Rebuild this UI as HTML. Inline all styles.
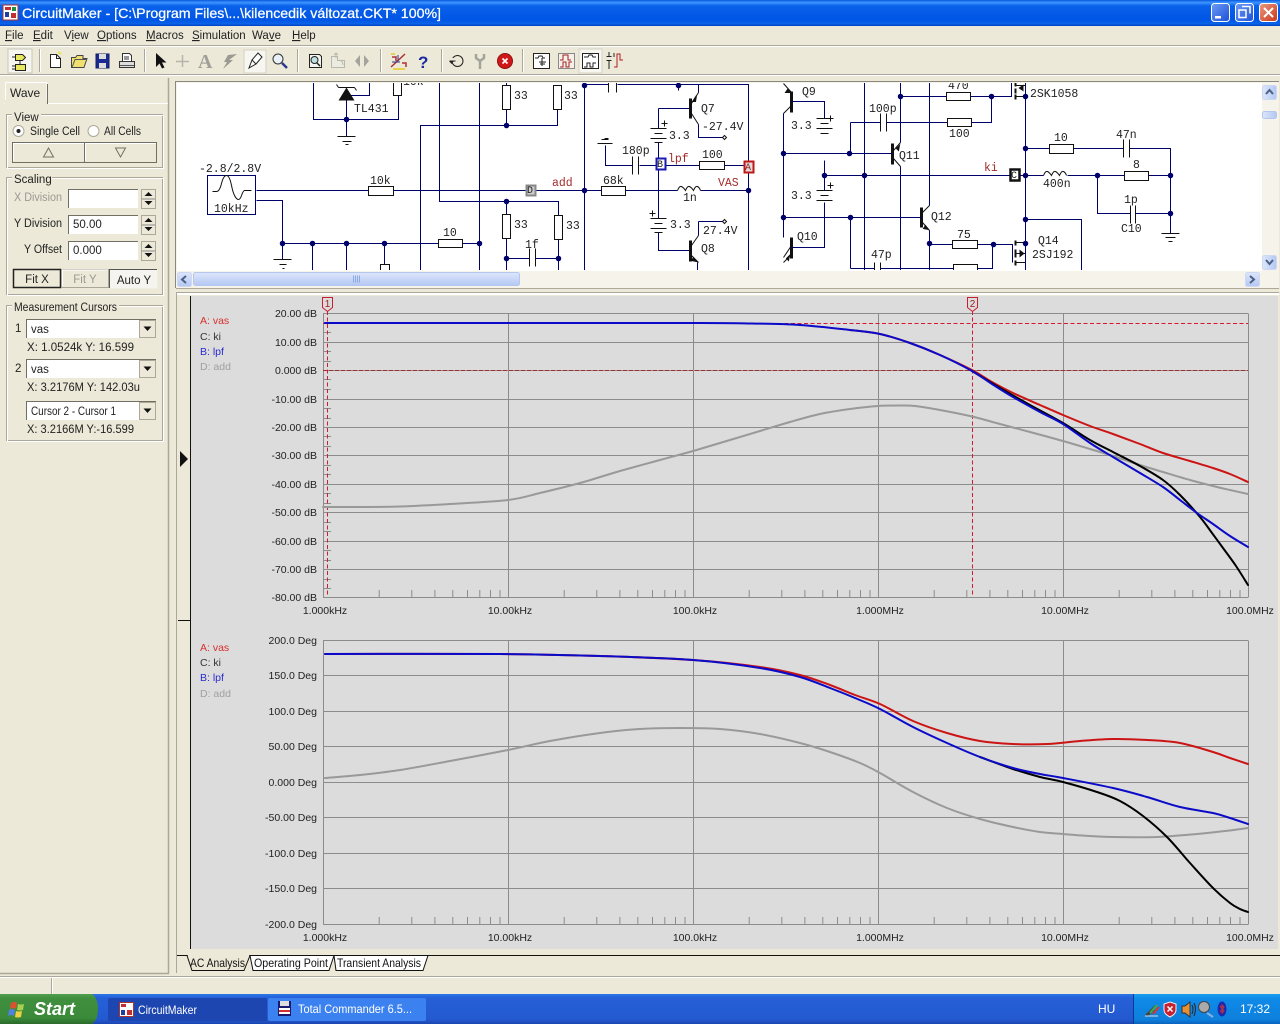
<!DOCTYPE html>
<html><head><meta charset="utf-8"><title>CircuitMaker</title>
<style>
html,body{margin:0;padding:0;background:#ece9d8;overflow:hidden}
svg{display:block;font-family:"Liberation Sans",sans-serif;font-size:11px}
.m{font-family:"Liberation Mono",monospace;font-size:11.5px;fill:#222}
.w{fill:none;stroke:#00006a;stroke-width:1}
.d{fill:none;stroke:#00006a;stroke-width:5.5;stroke-linecap:round}
.k{fill:none;stroke:#111;stroke-width:1}
.K{fill:none;stroke:#111;stroke-width:3}
.K2{fill:none;stroke:#111;stroke-width:2}
.res{fill:#fff;stroke:#111;stroke-width:1}
.g{fill:none;stroke:#8c8c8c;stroke-width:1}
.c{fill:none;stroke-width:2;stroke-linejoin:round;stroke-linecap:round}
.y{font-size:10.5px;fill:#222;text-anchor:end}
.x{font-size:10.5px;fill:#222;text-anchor:middle}
.l{font-size:10.5px}
.t{font-size:11.5px;fill:#222}
.hi{fill:none;stroke:#fff}
.sh{fill:none;stroke:#aca899}
.dk{fill:none;stroke:#716f64}
</style></head><body>
<svg width="1280" height="1024" viewBox="0 0 1280 1024" xmlns="http://www.w3.org/2000/svg">
<defs>
<linearGradient id="tb" x1="0" y1="0" x2="0" y2="1"><stop offset="0" stop-color="#0a5ae0"/><stop offset=".1" stop-color="#3d95ff"/><stop offset=".22" stop-color="#0a62ea"/><stop offset=".75" stop-color="#0055e5"/><stop offset=".92" stop-color="#0a63e8"/><stop offset="1" stop-color="#003cc0"/></linearGradient>
<linearGradient id="task" x1="0" y1="0" x2="0" y2="1"><stop offset="0" stop-color="#2a78e8"/><stop offset=".12" stop-color="#2560d8"/><stop offset=".85" stop-color="#2459d0"/><stop offset="1" stop-color="#1a45b0"/></linearGradient>
<linearGradient id="tray" x1="0" y1="0" x2="0" y2="1"><stop offset="0" stop-color="#1aa0f0"/><stop offset=".15" stop-color="#0f8ae8"/><stop offset=".85" stop-color="#0e80dc"/><stop offset="1" stop-color="#0a62c0"/></linearGradient>
<linearGradient id="start" x1="0" y1="0" x2="0" y2="1"><stop offset="0" stop-color="#4f9f4f"/><stop offset=".15" stop-color="#3f8f3f"/><stop offset=".8" stop-color="#3a8a3a"/><stop offset="1" stop-color="#2a6a2a"/></linearGradient>
<linearGradient id="sb" x1="0" y1="0" x2="0" y2="1"><stop offset="0" stop-color="#dde6fb"/><stop offset="1" stop-color="#b4c8f4"/></linearGradient>
<linearGradient id="sbv" x1="0" y1="0" x2="1" y2="0"><stop offset="0" stop-color="#dde6fb"/><stop offset="1" stop-color="#b4c8f4"/></linearGradient>
<linearGradient id="wb" x1="0" y1="0" x2="1" y2="1"><stop offset="0" stop-color="#6f9cf4"/><stop offset="1" stop-color="#1b50d8"/></linearGradient>
<linearGradient id="wr" x1="0" y1="0" x2="1" y2="1"><stop offset="0" stop-color="#ec9a80"/><stop offset="1" stop-color="#c8361a"/></linearGradient>
<clipPath id="sch"><rect x="177" y="83" width="1085" height="187"/></clipPath>
<path id="dec" d="M55.7 0v-7M88.3 0v-7M111.4 0v-7M129.3 0v-7M144 0v-7M156.3 0v-7M167 0v-7M176.5 0v-7" fill="none" stroke="#8c8c8c"/>
</defs>

<rect width="1280" height="1024" fill="#ece9d8"/>

<!-- Title bar -->
<rect width="1280" height="26" fill="url(#tb)"/>
<rect x="3" y="5" width="15" height="15" fill="#fff" stroke="#a33"/>
<path d="M5 7h6v3H5zM11 13h5v5h-5z" fill="#c03030"/><path d="M5 12h4v5H5z" fill="#2040a0"/><path d="M12 7h4v4h-4z" fill="#209040"/>
<text x="22" y="18" font-size="14" fill="#fff" textLength="419" lengthAdjust="spacingAndGlyphs" style="stroke:#fff;stroke-width:.25">CircuitMaker - [C:\Program Files\...\kilencedik változat.CKT* 100%]</text>
<rect x="1211.500" y="3.500" width="18" height="18" rx="3" fill="url(#wb)" stroke="#fff"/><path d="M1215 16h6v2.500h-6z" fill="#fff"/>
<rect x="1235.500" y="3.500" width="18" height="18" rx="3" fill="url(#wb)" stroke="#fff"/><path d="M1242 6.500h8v7M1239 10h7v7.500h-7z" fill="none" stroke="#fff" stroke-width="1.500"/>
<rect x="1259.500" y="3.500" width="18" height="18" rx="3" fill="url(#wr)" stroke="#fff"/><path d="M1264 8l9 9M1273 8l-9 9" stroke="#fff" stroke-width="2"/>

<!-- Menu -->
<g fill="#222" font-size="11.500">
<text x="5" y="39"><tspan text-decoration="underline">F</tspan>ile</text>
<text x="33" y="39"><tspan text-decoration="underline">E</tspan>dit</text>
<text x="64" y="39">V<tspan text-decoration="underline">i</tspan>ew</text>
<text x="97" y="39"><tspan text-decoration="underline">O</tspan>ptions</text>
<text x="146" y="39"><tspan text-decoration="underline">M</tspan>acros</text>
<text x="192" y="39"><tspan text-decoration="underline">S</tspan>imulation</text>
<text x="252" y="39">Wa<tspan text-decoration="underline">v</tspan>e</text>
<text x="292" y="39"><tspan text-decoration="underline">H</tspan>elp</text>
</g>
<path d="M0 45.500H1280" stroke="#aca899"/><path d="M0 46.500H1280" stroke="#fff"/>
<path d="M0 74.500H1280" stroke="#aca899"/><path d="M0 75.500H1280" stroke="#fff"/>

<!-- Toolbar -->
<path d="M39.500 49v23M144.500 49v23M297.500 49v23M380.500 49v23M441.500 49v23M522.500 49v23" stroke="#aca899"/>
<path d="M40.500 49v23M145.500 49v23M298.500 49v23M381.500 49v23M442.500 49v23M523.500 49v23" stroke="#fff"/>
<rect x="8" y="49" width="24" height="24" fill="#f6f5ef" stroke="#c8c6b8"/>
<path d="M15.500 54.500h7l3 3-3 3h-7zM15.500 64.500h10v6h-10zM20 61v3M12 57h3M12 66h3M12 69h3" fill="#e8e860" stroke="#222"/>
<path d="M50.500 54.500h6l4 4v9h-10z" fill="#fff" stroke="#222"/><path d="M56.500 54.500v4h4" fill="none" stroke="#222"/><path d="M58 52l3 2" stroke="#e8e050" stroke-width="2"/>
<path d="M71.500 67.500v-10h4l1.500-2h6v3h4l-3 9z" fill="#f0e070" stroke="#444"/><path d="M72 67.500l3-8h12" fill="none" stroke="#555"/>
<rect x="96" y="54" width="13" height="14" fill="#1a2a90" stroke="#102060"/><rect x="99" y="54" width="7" height="5" fill="#ddd"/><rect x="99" y="63" width="7" height="5" fill="#ddd"/>
<path d="M122.500 53.500h7l2 2v6h-9z" fill="#fff" stroke="#333"/><path d="M124 57h5M124 59h5" stroke="#333"/><rect x="119.500" y="61.500" width="15" height="6" fill="#ddd" stroke="#333"/><path d="M120 65.500h14" stroke="#555"/>
<path d="M156 53v14l3.500-3.500 2.500 5 2.500-1-2.500-5h4.500z" fill="#111"/>
<path d="M182.500 55v12M176 61.500h13" stroke="#b4b4ac" stroke-width="1.500"/>
<text x="198" y="68" font-family="Liberation Serif,serif" font-size="20" font-weight="bold" fill="#a0a098">A</text>
<path d="M237 54l-9 1-4 7h3l-4 7 10-9h-4z" fill="#9a9a92"/>
<rect x="244" y="50" width="22" height="23" fill="#f7f6f0" stroke="#d4d2c4"/>
<path d="M258 53l4 4-6 7-4-4zM252 60l-3 8 7-4" fill="#fff" stroke="#222"/>
<circle cx="278" cy="59" r="5" fill="#e8f0f8" stroke="#333"/><path d="M282 63l5 5" stroke="#2a3a90" stroke-width="2.500"/>
<path d="M309.500 54.500h10l2 2v11h-12z" fill="#f4f4f0" stroke="#222"/><circle cx="314.500" cy="60" r="3.500" fill="#bfe0e0" stroke="#222"/><path d="M317 63l3 3" stroke="#222" stroke-width="1.500"/>
<path d="M331.500 56.500h6v4h7v7h-13z" fill="#ecebe0" stroke="#b8b8ae"/><path d="M336 53v5M334 55l2-2 2 2M340 60c2 1 3 3 3 5" fill="none" stroke="#b8b8ae"/>
<path d="M360 55v12l-5-6zM364 55v12l5-6z" fill="#a4a49c"/>
<path d="M391 67l14-13M392 57h4v4M402 63h4v4" stroke="#b03030" stroke-width="1.500" fill="none"/><path d="M391 54h4M393 69h12" stroke="#e8d050" stroke-width="2"/><path d="M392 62h8M398 55v6" stroke="#2a3a90"/>
<text x="418" y="68" font-size="17" font-weight="bold" fill="#1a2aa0">?</text>
<circle cx="457.500" cy="61" r="5.500" fill="none" stroke="#222"/><path d="M449 61h5l-2.500 3z" fill="#222"/><rect x="450" y="58" width="5" height="3" fill="#ece9d8"/><path d="M449.500 61h6" stroke="#222"/>
<path d="M476 54v4l4 3v8M484 54v4l-4 3" fill="none" stroke="#a4a49c" stroke-width="2.500"/>
<circle cx="505" cy="61" r="7.500" fill="#d01818" stroke="#901010"/><path d="M502.500 58.500l5 5M507.500 58.500l-5 5" stroke="#fff" stroke-width="1.700"/>
<rect x="533.500" y="53.500" width="16" height="15" fill="#fff" stroke="#222"/><path d="M535 58h3l1-2h3l1 2h2M542 58v8M539 62h7M540 64h5" fill="none" stroke="#222"/>
<rect x="558.500" y="53.500" width="16" height="15" fill="#f6f0e8" stroke="#888"/><path d="M560 60h3v-5h5v5h3M560 67h3v-5h3v5h3v-5h3" fill="none" stroke="#a02020"/>
<rect x="579" y="49" width="23" height="24" fill="#f7f6f0" stroke="#d4d2c4"/>
<rect x="582.500" y="53.500" width="16" height="15" fill="#fff" stroke="#222"/><path d="M584 57h4l1-2h3l1 2h3M584 67h3v-4h3v4h3v-4h3" fill="none" stroke="#222"/>
<path d="M606.500 56.500h5M606.500 60.500h5M609 52v4M609 61v8" stroke="#222" fill="none"/><path d="M614 67h3v-13h3v6h3" fill="none" stroke="#b02020"/><path d="M614 53v4" stroke="#222"/>

<!-- Left panel -->
<path d="M168.500 78v896M0 973.500h169" class="sh" stroke-width="1.500"/>
<path d="M4.500 103.500H168" class="hi"/>
<path d="M5.500 104V84q0-1.500 1.500-1.500h39q1 0 1 1.500v19" fill="#ece9d8" stroke="#fff"/><path d="M47.500 84v20" class="dk"/>
<rect x="5" y="100" width="42" height="5" fill="#ece9d8"/>
<text x="10" y="97" font-size="12" fill="#222">Wave</text>

<!-- groups -->
<rect x="6.500" y="114.500" width="156" height="53" fill="none" stroke="#aca899"/><rect x="7.500" y="115.500" width="156" height="53" fill="none" stroke="#fff"/>
<rect x="12" y="110" width="29" height="12" fill="#ece9d8"/><text x="14" y="121" class="t">View</text>
<circle cx="18.500" cy="131" r="5.500" fill="#fff" stroke="#aca899"/><circle cx="18.500" cy="131" r="2" fill="#222"/>
<text x="30" y="135" class="t" textLength="50" lengthAdjust="spacingAndGlyphs">Single Cell</text>
<circle cx="93.500" cy="131" r="5.500" fill="#fff" stroke="#aca899"/>
<text x="104" y="135" class="t" textLength="37" lengthAdjust="spacingAndGlyphs">All Cells</text>
<rect x="12.500" y="142.500" width="72" height="20" fill="#ece9d8" stroke="#716f64"/><path d="M13.500 161V143.500H84" class="hi"/>
<rect x="84.500" y="142.500" width="72" height="20" fill="#ece9d8" stroke="#716f64"/><path d="M85.500 161V143.500H156" class="hi"/>
<path d="M48.500 148l-5 9h10z" fill="none" stroke="#716f64"/><path d="M115.500 148h10l-5 9z" fill="none" stroke="#716f64"/>

<rect x="6.500" y="177.500" width="156" height="117" fill="none" stroke="#aca899"/><rect x="7.500" y="178.500" width="156" height="117" fill="none" stroke="#fff"/>
<rect x="12" y="173" width="40" height="12" fill="#ece9d8"/><text x="14" y="183" class="t">Scaling</text>
<text x="14" y="201" class="t" style="fill:#9a9a92" textLength="48" lengthAdjust="spacingAndGlyphs">X Division</text>
<text x="14" y="227" class="t" textLength="48" lengthAdjust="spacingAndGlyphs">Y Division</text>
<text x="24" y="253" class="t" textLength="38" lengthAdjust="spacingAndGlyphs">Y Offset</text>
<g fill="#fff">
<rect x="68" y="189" width="70" height="19"/><rect x="68" y="215" width="70" height="19"/><rect x="68" y="241" width="70" height="19"/>
</g>
<path d="M68.500 208V189.500H138M68.500 234V215.500H138M68.500 260V241.500H138" stroke="#716f64" fill="none"/>
<text x="73" y="228" class="t">50.00</text><text x="73" y="254" class="t">0.000</text>
<g>
<rect x="141.500" y="189.500" width="14" height="19" fill="#ece9d8" stroke="#aca899"/><path d="M148.500 192l-4 4h8zM144.500 201h8l-4 4z" fill="#111"/><path d="M142 199h13" stroke="#888"/>
<rect x="141.500" y="215.500" width="14" height="19" fill="#ece9d8" stroke="#aca899"/><path d="M148.500 218l-4 4h8zM144.500 227h8l-4 4z" fill="#111"/><path d="M142 225h13" stroke="#888"/>
<rect x="141.500" y="241.500" width="14" height="19" fill="#ece9d8" stroke="#aca899"/><path d="M148.500 244l-4 4h8zM144.500 253h8l-4 4z" fill="#111"/><path d="M142 251h13" stroke="#888"/>
</g>
<rect x="13.500" y="269.500" width="47" height="18" fill="#ece9d8" stroke="#222" stroke-width="1.500"/>
<text x="37" y="283" class="t" text-anchor="middle">Fit X</text>
<rect x="61.500" y="269.500" width="47" height="18" fill="#ece9d8" stroke="#a8a698"/><path d="M62.500 286v-16H108" class="hi"/>
<text x="85" y="283" class="t" text-anchor="middle" style="fill:#9a9a92">Fit Y</text>
<rect x="109.500" y="269.500" width="48" height="19" fill="#f5f4ee"/><path d="M109.500 288V269.500H157" stroke="#555" fill="none"/>
<text x="134" y="284" class="t" text-anchor="middle">Auto Y</text>

<rect x="6.500" y="305.500" width="156" height="135" fill="none" stroke="#aca899"/><rect x="7.500" y="306.500" width="156" height="135" fill="none" stroke="#fff"/>
<rect x="12" y="301" width="107" height="12" fill="#ece9d8"/><text x="14" y="311" class="t" textLength="103" lengthAdjust="spacingAndGlyphs">Measurement Cursors</text>
<text x="15" y="332" class="t">1</text><text x="15" y="372" class="t">2</text>
<g>
<rect x="26" y="319" width="130" height="19" fill="#fff"/><path d="M26.500 338V319.500H156" stroke="#716f64" fill="none"/><rect x="139.500" y="320.500" width="16" height="17" fill="#ece9d8" stroke="#aca899"/><path d="M143.500 326.500h8l-4 4.500z" fill="#111"/>
<rect x="26" y="359" width="130" height="19" fill="#fff"/><path d="M26.500 378V359.500H156" stroke="#716f64" fill="none"/><rect x="139.500" y="360.500" width="16" height="17" fill="#ece9d8" stroke="#aca899"/><path d="M143.500 366.500h8l-4 4.500z" fill="#111"/>
<rect x="26" y="401" width="130" height="19" fill="#fff"/><path d="M26.500 420V401.500H156" stroke="#716f64" fill="none"/><rect x="139.500" y="402.500" width="16" height="17" fill="#ece9d8" stroke="#aca899"/><path d="M143.500 408.500h8l-4 4.500z" fill="#111"/>
</g>
<text x="31" y="333" class="t">vas</text><text x="31" y="373" class="t">vas</text>
<text x="31" y="415" class="t" textLength="85" lengthAdjust="spacingAndGlyphs">Cursor 2 - Cursor 1</text>
<text x="27" y="351" class="t" textLength="107" lengthAdjust="spacingAndGlyphs">X: 1.0524k  Y: 16.599</text>
<text x="27" y="391" class="t" textLength="113" lengthAdjust="spacingAndGlyphs">X: 3.2176M  Y: 142.03u</text>
<text x="27" y="433" class="t" textLength="107" lengthAdjust="spacingAndGlyphs">X: 3.2166M  Y:-16.599</text>

<!-- Schematic pane -->
<rect x="176" y="82" width="1103" height="206" fill="#f5f3ea"/>
<rect x="177" y="83" width="1085" height="188" fill="#fff"/>
<path d="M175.500 288V81.500H1279" stroke="#8a887c" fill="none"/>
<g clip-path="url(#sch)">
<g transform="translate(.5 .5)">
<path class="w" d="M313 82V119H398V95M369 82V95H346M346 100V136M439 82V201H558V215M558 239V270M479 82V270M420 270V125H557V109M506 82V85M506 109V125M506 201V214M506 238V270M256 190H368M393 190H525M536 190H601M625 190H677M700 190H748M256 200H282V259M282 243H438M462 243H479M312 243V270M346 243V270M384 243V264M506 258H529M535 258H558"/>
<path class="k" d="M337 136h18M342 141h9M345 144h3M273 259h18M279 264h7M282 268h2M529 248v18M535 248v18"/>
<path d="M338 100h16l-8-13z" fill="#111"/><path d="M338 87h16M338 87l-2-3M354 87l2 3" class="k"/>
<rect class="res" x="393" y="72" width="8" height="23"/>
<rect class="res" x="502" y="85" width="8" height="24"/><rect class="res" x="553" y="85" width="8" height="24"/>
<rect class="res" x="502" y="214" width="8" height="24"/><rect class="res" x="554" y="215" width="8" height="24"/>
<rect class="res" x="368" y="186" width="25" height="9"/><rect class="res" x="438" y="239" width="24" height="8"/>
<rect x="207" y="175" width="48" height="39" fill="#fff" stroke="#00006a"/>
<path d="M212 191h4q3 0 5-8t5-8 5 10 5 13 5-3 4-5h6" fill="none" stroke="#111"/>
<rect x="380" y="264" width="9" height="10" class="res"/>
<path class="d" d="M346 119h0M506 125h0M282 243h0M312 243h0M346 243h0M384 243h0M479 243h0M506 201h0M506 258h0M558 258h0"/>
<rect x="526" y="185" width="9" height="10" fill="#ccc" stroke="#888" stroke-width="2"/>

<!-- middle -->
<path class="w" d="M584 82V270M584 84H608M617 84H748V270M678 84V90M658 108H690M658 108V128M698 84V92M698 124V137H722M658 142V218M658 232V250H690M605 145V165H632M639 165H655M665 165H699M724 165H744M698 221V235M698 221H722M697 262V270"/>
<path class="k" d="M650 128h16M654 133h8M650 138h16M654 142h8M597 143h15M601 139h7M632 156v18M638 156v18M650 218h16M654 223h8M650 228h16M654 232h8"/>
<path d="M608 82v10M616 82v10" class="k"/>
<path class="K" d="M690 98v20M690 240v21M791 91v21M791 237v21M892 143v21M921 207v20"/>
<path class="k" d="M691 103l7-11M691 113l7 11M691 245l7-10M691 255l7 7M783 83l8 9M791 105l-8 8M791 245l-8 12M783 262l8-8M893 150l7-8M893 158l7 8M922 212l7-7M922 222l7 8"/>
<path d="M692 101l4-6-1 6zM693 257l3 4-5-1zM787 89l3 3-5 0zM786 258l3-3-1 5zM896 148l3-3-1 5zM925 225l3 4-5-1z" fill="#111" stroke="#111"/>
<path class="k" d="M664 120v6M661 123h6M652 210v6M649 213h6M830 115v6M827 118h6M830 182v6M827 185h6M604 138h4"/>
<path d="M722 137l2-2 2 2-2 2zM722 221l2-2 2 2-2 2z" fill="#fff" stroke="#111"/>
<rect class="res" x="699" y="161" width="25" height="8"/><rect class="res" x="601" y="186" width="24" height="9"/>
<path class="k" d="M677 190q2-5 4-4t4 4q2-5 4-4t4 4q2-5 4-4t3 4M1043 175q2-5 4-4t4 4q2-5 4-4t4 4q2-5 4-4t3 4"/>
<rect x="656" y="158" width="9" height="11" fill="#fff" stroke="#1a1ab0" stroke-width="2"/>
<rect x="744" y="161" width="9" height="11" fill="#ddd" stroke="#c01818" stroke-width="2"/>
<path class="d" d="M584 85h0M678 85h0M584 190h0M748 190h0"/>

<!-- right -->
<path class="w" d="M783 113V237M791 101H824V118M824 160V190M824 202V247H791M783 153H892M783 217H921M824 175H1009M850 122V153M850 122H880M886 122H947M971 122H991V96M864 82V270M900 82V142M900 166V270M900 96H946M970 96H1011V82M929 82V205M929 230V270M850 217V268M850 268H874M880 268H953M929 244H952M977 244H1012V262M992 244V268H977M1025 82V270M1025 148H1049M1073 148H1123M1129 148H1170V233M1019 175H1043M1067 175H1124M1148 175H1170M1097 175V213H1130M1135 213H1170M1025 219H1081V270"/>
<path class="k" d="M816 118h16M820 123h8M816 128h16M820 133h8M816 190h16M820 195h8M816 200h16M880 113v18M886 113v18M874 262v10M880 262v10M1123 139v18M1129 139v18M1130 205v18M1135 205v18M1161 233h18M1165 237h10M1168 241h4"/>
<rect class="res" x="946" y="92" width="24" height="8"/><rect class="res" x="947" y="118" width="24" height="8"/>
<rect class="res" x="952" y="240" width="25" height="8"/><rect class="res" x="953" y="264" width="24" height="10"/>
<rect class="res" x="1049" y="144" width="24" height="9"/><rect class="res" x="1124" y="171" width="24" height="9"/>
<!-- MOSFETs -->
<path class="K2" d="M1015 80v6M1015 88v5M1015 94v5M1015 240v5M1015 249v8M1015 260v5"/>
<path class="k" d="M1015 85h10M1015 96h10M1015 242h10M1015 262h10M1015 253h10"/>
<path d="M1018 87.500l5-3.500v7zM1024 253l-5-4v8z" fill="#111"/>
<path class="d" d="M824 175h0M783 153h0M849 153h0M864 175h0M783 217h0M850 217h0M900 96h0M991 96h0M1025 96h0M1025 148h0M1025 175h0M1025 219h0M1025 243h0M1097 175h0M1170 175h0M1170 213h0M929 243h0M993 244h0"/>
<rect x="1010" y="169" width="9" height="11" fill="#fff" stroke="#111" stroke-width="2.500"/>
</g>
<g>
<text class="m" x="354" y="112">TL431</text><text class="m" x="403" y="85">10k</text>
<text class="m" x="199" y="172">-2.8/2.8V</text><text class="m" x="214" y="212">10kHz</text>
<text class="m" x="370" y="184">10k</text><text class="m" x="443" y="236">10</text>
<text class="m" x="514" y="99">33</text><text class="m" x="564" y="99">33</text>
<text class="m" x="514" y="228">33</text><text class="m" x="566" y="229">33</text>
<text class="m" x="525" y="248">1f</text>
<text class="m" x="527" y="193" style="font-size:10px">D</text>
<text class="m" x="622" y="154">180p</text><text class="m" x="669" y="139">3.3</text>
<text class="m" x="701" y="112">Q7</text><text class="m" x="702" y="130">-27.4V</text>
<text class="m" x="702" y="158">100</text><text class="m" x="603" y="184">68k</text><text class="m" x="683" y="201">1n</text>
<text class="m" x="670" y="228">3.3</text><text class="m" x="703" y="234">27.4V</text><text class="m" x="701" y="252">Q8</text>
<text class="m" x="657" y="167" style="font-size:10px">B</text><text class="m" x="745" y="170" style="font-size:10px;fill:#922">A</text>
<text class="m" x="802" y="95">Q9</text><text class="m" x="791" y="129">3.3</text><text class="m" x="791" y="199">3.3</text><text class="m" x="797" y="240">Q10</text>
<text class="m" x="869" y="112">100p</text><text class="m" x="899" y="159">Q11</text><text class="m" x="871" y="258">47p</text>
<text class="m" x="931" y="220">Q12</text><text class="m" x="948" y="89">470</text><text class="m" x="949" y="137">100</text><text class="m" x="957" y="238">75</text>
<text class="m" x="1030" y="97">2SK1058</text><text class="m" x="1038" y="244">Q14</text><text class="m" x="1032" y="258">2SJ192</text>
<text class="m" x="1011" y="178" style="font-size:10px">C</text>
<text class="m" x="1054" y="141">10</text><text class="m" x="1116" y="138">47n</text><text class="m" x="1043" y="187">400n</text><text class="m" x="1133" y="168">8</text>
<text class="m" x="1124" y="203">1p</text><text class="m" x="1121" y="232">C10</text>
<text class="m" x="552" y="186" style="fill:#a52a2a">add</text><text class="m" x="668" y="162" style="fill:#a52a2a">lpf</text>
<text class="m" x="718" y="186" style="fill:#a52a2a">VAS</text><text class="m" x="984" y="171" style="fill:#a52a2a">ki</text>
<text class="m" x="1043" y="83">~</text>
</g>
</g>

<!-- schematic scrollbars -->
<rect x="177" y="271" width="1085" height="16" fill="#f5f3ea"/>
<rect x="1262" y="83" width="16" height="188" fill="#f5f3ea"/>
<rect x="177.500" y="272.500" width="14" height="14" rx="2" fill="url(#sb)" stroke="#cdd8f2"/><path d="M186 276l-4 3.500 4 3.500" fill="none" stroke="#4d6185" stroke-width="2"/>
<rect x="193.500" y="272.500" width="326" height="13" rx="2" fill="url(#sb)" stroke="#b5c6ef"/><path d="M353.500 275.500v7M355.500 275.500v7M357.500 275.500v7M359.500 275.500v7" stroke="#8ea8e0"/>
<rect x="1245.500" y="272.500" width="14" height="14" rx="2" fill="url(#sb)" stroke="#cdd8f2"/><path d="M1250 276l4 3.500-4 3.500" fill="none" stroke="#4d6185" stroke-width="2"/>
<rect x="1262.500" y="85.500" width="14" height="14" rx="2" fill="url(#sbv)" stroke="#cdd8f2"/><path d="M1266 94l3.500-4 3.500 4" fill="none" stroke="#4d6185" stroke-width="2"/>
<rect x="1262.500" y="111.500" width="14" height="7" rx="2" fill="url(#sbv)" stroke="#b5c6ef"/>
<rect x="1262.500" y="255.500" width="14" height="14" rx="2" fill="url(#sbv)" stroke="#cdd8f2"/><path d="M1266 260l3.500 4 3.500-4" fill="none" stroke="#4d6185" stroke-width="2"/>
<path d="M176 288.500H1279" stroke="#aca899"/>
<path d="M176 292.500H1279" stroke="#aca899"/><path d="M176 293.500H1279" stroke="#fff"/>

<!-- Plots -->
<path d="M176.500 293v680" stroke="#aca899"/>
<rect x="177" y="294" width="13" height="655" fill="#ece9d8"/>
<rect x="191" y="296" width="1087" height="653" fill="#dcdcdc"/>
<path d="M177 294.500H1279" stroke="#fff"/>
<path d="M190.500 296V949M178 620.500H190M178 949.500H190M178 949V953" stroke="#111" fill="none"/>
<path d="M180 451v16l8-8z" fill="#111"/>

<!-- plot 1 grid -->
<path class="g" d="M323.500 313.500V597.500M508.500 313.500V597.500M693.500 313.500V597.500M878.500 313.500V597.500M1063.500 313.500V597.500M1248.500 313.500V597.500M323 313.500H1248M323 342.500H1248M323 370.500H1248M323 399.500H1248M323 427.500H1248M323 455.500H1248M323 484.500H1248M323 512.500H1248M323 541.500H1248M323 569.500H1248M323 597.500H1248"/>
<g transform="translate(.5 597)"><use href="#dec" x="323"/><use href="#dec" x="508"/><use href="#dec" x="693"/><use href="#dec" x="878"/><use href="#dec" x="1063"/></g>
<path d="M323 322.500h8M323 332.500h8M323 351.500h8M323 361.500h8M323 379.500h8M323 389.500h8M323 408.500h8M323 418.500h8M323 436.500h8M323 446.500h8M323 465.500h8M323 474.500h8M323 493.500h8M323 503.500h8M323 522.500h8M323 531.500h8M323 550.500h8M323 560.500h8M323 579.500h8M323 588.500h8" stroke="#8c8c8c"/>
<path d="M323 323.500H1248M327.500 311V597M972.500 311V597" stroke="#d81830" stroke-dasharray="4 2.500" fill="none"/>
<path d="M323 370.500H1248" stroke="#a03030" stroke-dasharray="4 2" fill="none"/>
<path d="M322.500 297.500h10v10l-5 4-5-4zM967.500 297.500h10v10l-5 4-5-4z" fill="#dcdcdc" stroke="#c82030"/>
<text x="327.500" y="307" font-size="10" text-anchor="middle" fill="#a02020">1</text><text x="972.500" y="307" font-size="10" text-anchor="middle" fill="#a02020">2</text>

<polyline class="c" stroke="#999" points="323,507 360,507 400,506.500 450,504 508,500 540,493 580,483 620,471 660,460 693,451 730,440 760,431 790,422 820,414 850,409 878,406 900,405.500 915,406 940,410 972,416.500 1000,424 1030,432 1063,441 1090,449 1113,456 1140,465 1163,472 1190,480 1213,486 1230,490 1248,494"/>
<polyline class="c" stroke="#cc1414" points="850,330 880,334 910,343 940,355 972,370 992,382 1013,393 1040,405 1063,415 1090,426 1113,434 1140,444 1163,453 1190,461 1213,468 1230,474 1248,482"/>
<polyline class="c" stroke="#000" points="972,371 1000,388 1030,405 1063,423 1090,440 1113,452 1140,466 1163,480 1180,495 1200,517 1212,533 1223,548 1236,566 1248,585"/>
<polyline class="c" stroke="#0a0ac8" points="325,323 500,323 700,323 752,323.500 800,325 850,330 880,334 910,343 940,355 972,371 992,384 1013,397 1040,412 1063,424 1090,443 1113,457 1140,473 1163,487 1180,500 1197,513 1213,524 1230,536 1248,547"/>

<text class="y" x="317" y="317">20.00 dB</text><text class="y" x="317" y="346">10.00 dB</text><text class="y" x="317" y="374">0.000 dB</text><text class="y" x="317" y="403">-10.00 dB</text><text class="y" x="317" y="431">-20.00 dB</text><text class="y" x="317" y="459">-30.00 dB</text><text class="y" x="317" y="488">-40.00 dB</text><text class="y" x="317" y="516">-50.00 dB</text><text class="y" x="317" y="545">-60.00 dB</text><text class="y" x="317" y="573">-70.00 dB</text><text class="y" x="317" y="601">-80.00 dB</text>
<text class="x" x="325" y="614">1.000kHz</text><text class="x" x="510" y="614">10.00kHz</text><text class="x" x="695" y="614">100.0kHz</text><text class="x" x="880" y="614">1.000MHz</text><text class="x" x="1065" y="614">10.00MHz</text><text class="x" x="1250" y="614">100.0MHz</text>
<text class="l" x="200" y="324" fill="#d83030">A: vas</text><text class="l" x="200" y="340" fill="#333">C: ki</text><text class="l" x="200" y="355" fill="#2a2acc">B: lpf</text><text class="l" x="200" y="370" fill="#a0a0a0">D: add</text>

<!-- plot 2 grid -->
<path class="g" d="M323.500 640.500V924.500M508.500 640.500V924.500M693.500 640.500V924.500M878.500 640.500V924.500M1063.500 640.500V924.500M1248.500 640.500V924.500M323 640.500H1248M323 675.500H1248M323 711.500H1248M323 746.500H1248M323 782.500H1248M323 817.500H1248M323 853.500H1248M323 888.500H1248M323 924.500H1248"/>
<g transform="translate(.5 924)"><use href="#dec" x="323"/><use href="#dec" x="508"/><use href="#dec" x="693"/><use href="#dec" x="878"/><use href="#dec" x="1063"/></g>

<polyline class="c" stroke="#999" points="325,778 360,775 400,770 450,761 508,750 550,741 600,733 640,729 680,728 720,729 760,734 800,743 830,752 860,763 880,773 913,792 947,808 980,819 1013,827 1040,832 1063,834 1090,836 1113,837 1157,837 1197,834 1225,831 1248,828"/>
<polyline class="c" stroke="#cc1414" points="325,654 500,654 600,656 693,660 760,667 800,675 830,685 855,695 880,704 913,721 947,733 980,741 1013,744 1047,744 1080,741 1113,739 1147,740 1180,743 1213,752 1230,758 1248,764"/>
<polyline class="c" stroke="#000" points="980,757 1013,769 1040,777 1063,782 1097,792 1120,801 1143,816 1167,837 1190,863 1213,888 1230,903 1240,909 1248,912"/>
<polyline class="c" stroke="#0a0ac8" points="325,654 500,654 600,656 693,660 760,668 800,677 830,688 855,698 880,709 913,727 947,743 980,757 1013,768 1040,774 1063,778 1113,788 1147,797 1180,807 1213,813 1230,818 1248,824"/>

<text class="y" x="317" y="644">200.0 Deg</text><text class="y" x="317" y="679">150.0 Deg</text><text class="y" x="317" y="715">100.0 Deg</text><text class="y" x="317" y="750">50.00 Deg</text><text class="y" x="317" y="786">0.000 Deg</text><text class="y" x="317" y="821">-50.00 Deg</text><text class="y" x="317" y="857">-100.0 Deg</text><text class="y" x="317" y="892">-150.0 Deg</text><text class="y" x="317" y="928">-200.0 Deg</text>
<text class="x" x="325" y="941">1.000kHz</text><text class="x" x="510" y="941">10.00kHz</text><text class="x" x="695" y="941">100.0kHz</text><text class="x" x="880" y="941">1.000MHz</text><text class="x" x="1065" y="941">10.00MHz</text><text class="x" x="1250" y="941">100.0MHz</text>
<text class="l" x="200" y="651" fill="#d83030">A: vas</text><text class="l" x="200" y="666" fill="#333">C: ki</text><text class="l" x="200" y="681" fill="#2a2acc">B: lpf</text><text class="l" x="200" y="697" fill="#a0a0a0">D: add</text>

<!-- bottom tabs -->
<rect x="177" y="949" width="1103" height="24" fill="#ece9d8"/>
<path d="M177 955.500H1280" stroke="#111"/>
<path d="M250 955.500l3 15h76l5-15zM334 955.500l2 15h87l5-15z" fill="#fff" stroke="#111"/>
<path d="M187 955.500l5 15h52l6-15" fill="#ece9d8" stroke="#111"/><path d="M188 955.500h61" stroke="#ece9d8"/>
<text x="190" y="967" font-size="12" fill="#111" textLength="55" lengthAdjust="spacingAndGlyphs">AC Analysis</text>
<text x="254" y="967" font-size="12" fill="#111" textLength="74" lengthAdjust="spacingAndGlyphs">Operating Point</text>
<text x="337" y="967" font-size="12" fill="#111" textLength="84" lengthAdjust="spacingAndGlyphs">Transient Analysis</text>
<path d="M0 976.500H1280" stroke="#aca899"/><path d="M0 977.500H1280" stroke="#fff"/><path d="M51.500 978V994" stroke="#aca899"/><path d="M52.500 978V994" stroke="#fff"/>

<!-- Taskbar -->
<rect y="994" width="1280" height="30" fill="url(#task)"/>
<path d="M0 994H92q6 4 6 15t-6 15H0z" fill="url(#start)"/>
<path d="M11 1003q4-2 6 0l-1 6q-3-2-6 0z" fill="#e05030"/><path d="M18 1004q3 1 6 0l-1 6q-3 1-6 0z" fill="#a8d050"/><path d="M9 1010q3-2 6 0l-1 6q-3-2-6 0z" fill="#5080e0"/><path d="M16 1011q3 1 6 0l-1 6q-3 1-6 0z" fill="#f0d040"/>
<text x="34" y="1015" font-size="18" font-weight="bold" font-style="italic" fill="#fff">Start</text>
<rect x="108" y="998" width="159" height="23" rx="2" fill="#1e46b0"/>
<rect x="268" y="998" width="158" height="23" rx="2" fill="#3c81f0"/>
<rect x="119.500" y="1002.500" width="14" height="14" fill="#fff" stroke="#a33"/><path d="M121 1004h5v3h-5zM127 1010h5v5h-5z" fill="#c03030"/><path d="M121 1010h4v5h-4z" fill="#2040a0"/>
<text x="138" y="1014" font-size="12" fill="#fff" textLength="59" lengthAdjust="spacingAndGlyphs">CircuitMaker</text>
<rect x="278" y="1001" width="13" height="15" fill="#1a1a70"/><rect x="280" y="1001" width="9" height="5" fill="#ddd"/><path d="M279 1008h11v2h-11z" fill="#fff"/><path d="M279 1010h11v2h-11z" fill="#d03030"/><path d="M279 1012h11v2h-11z" fill="#fff"/>
<text x="298" y="1013" font-size="12" fill="#fff" textLength="114" lengthAdjust="spacingAndGlyphs">Total Commander 6.5...</text>
<text x="1098" y="1013" font-size="12" fill="#fff">HU</text>
<rect x="1134" y="994" width="146" height="30" fill="url(#tray)"/><path d="M1133.500 994V1024" stroke="#0c3a90"/>
<path d="M1145 1015l8-8 4-3-3 7-6 5z" fill="#444"/><path d="M1150 1013l7-8" stroke="#40b040" stroke-width="2"/><path d="M1153 1014l6-7" stroke="#e03030" stroke-width="2"/><path d="M1145 1016h13" stroke="#ddd"/>
<path d="M1164 1004l6-2 6 2v6q0 4-6 7-6-3-6-7z" fill="#c82030" stroke="#eee"/><path d="M1167.500 1006.500l5 5M1172.500 1006.500l-5 5" stroke="#fff" stroke-width="1.500"/>
<path d="M1182 1006h3l5-4v15l-5-4h-3z" fill="#e89030" stroke="#333"/><path d="M1192 1005q2 4 0 9M1194 1003q3 6 0 13" fill="none" stroke="#222"/>
<circle cx="1204" cy="1007" r="5.500" fill="#aaa" stroke="#444"/><path d="M1207 1013l6 4" stroke="#8ab0e0" stroke-width="2"/>
<ellipse cx="1222" cy="1009" rx="4.500" ry="7.500" fill="#1a2ab0"/><path d="M1220 1006l4 5-2 2v-8l2 2-4 5" fill="none" stroke="#d03030"/>
<text x="1240" y="1013" font-size="12" fill="#fff">17:32</text>
</svg>
<script>
document.querySelectorAll('polyline.c').forEach(function(el){
  var p=el.getAttribute('points').trim().split(/\s+/).map(function(s){return s.split(',').map(Number)});
  var d='M'+p[0][0]+' '+p[0][1];
  for(var i=0;i<p.length-1;i++){
    var a=p[Math.max(i-1,0)],b=p[i],c=p[i+1],e=p[Math.min(i+2,p.length-1)];
    d+='C'+(b[0]+(c[0]-a[0])/6)+' '+(b[1]+(c[1]-a[1])/6)+' '+(c[0]-(e[0]-b[0])/6)+' '+(c[1]-(e[1]-b[1])/6)+' '+c[0]+' '+c[1];
  }
  var n=document.createElementNS('http://www.w3.org/2000/svg','path');
  n.setAttribute('d',d);n.setAttribute('class','c');n.setAttribute('stroke',el.getAttribute('stroke'));
  el.parentNode.replaceChild(n,el);
});
</script>
</body></html>
